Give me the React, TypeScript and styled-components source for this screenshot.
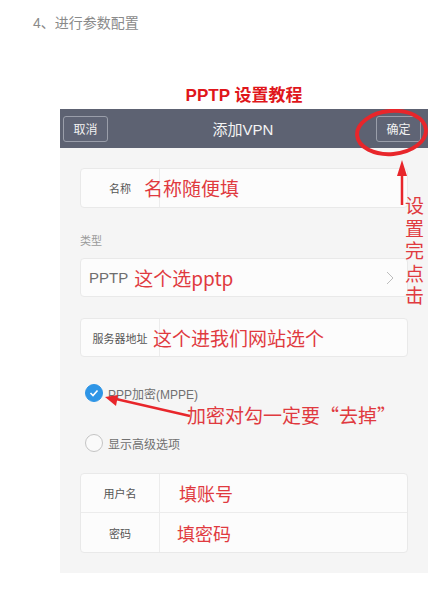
import styled, { createGlobalStyle } from "styled-components";

const GlobalStyle = createGlobalStyle`
	body {
		margin: 0;
		background: #fff;
		font-family: "Liberation Sans", "Noto Sans CJK SC", sans-serif;
	}
`;

const Page = styled.div`
	width: 443px;
	height: 594px;
	overflow: hidden;
`;

const Intro = styled.p`
	margin: 13px 0 0 33px;
	font-size: 14px;
	line-height: 20px;
	color: #8a8a8a;
`;

const Title = styled.h2`
	margin: 52px 0 2px 60px;
	width: 368px;
	text-align: center;
	font-size: 17px;
	line-height: 22px;
	font-weight: bold;
	color: #e0161b;
`;

const Phone = styled.div`
	position: relative;
	margin-left: 60px;
	width: 368px;
`;

const NavBar = styled.header`
	height: 39px;
	background: #5d6272;
	display: flex;
	align-items: center;
	justify-content: space-between;
	padding: 0 7px 0 3px;
	box-sizing: border-box;
`;

const NavButton = styled.button`
	width: 45px;
	height: 26px;
	border: 1px solid #9a9eaa;
	border-radius: 3px;
	background: #5f6475;
	color: #f2f2f2;
	font-size: 12px;
	font-family: inherit;
	padding: 0;
`;

const NavTitle = styled.span`
	font-size: 15px;
	color: #f4f4f4;
	margin-left: 2px;
`;

const Body = styled.div`
	background: #f5f5f5;
	padding: 20px 20px 20px;
	display: flex;
	flex-direction: column;
`;

const Card = styled.div<{ $mt?: number }>`
	margin-top: ${(p) => p.$mt ?? 0}px;
	background: #fcfcfc;
	border: 1px solid #e9e9e9;
	border-radius: 4px;
	display: flex;
	flex-direction: column;
`;

const Row = styled.div<{ $h: number }>`
	height: ${(p) => p.$h}px;
	display: flex;
	align-items: center;
	& + & {
		border-top: 1px solid #ececec;
	}
`;

const Label = styled.div`
	width: 78px;
	height: 100%;
	flex: none;
	display: flex;
	align-items: center;
	justify-content: center;
	border-right: 1px solid #ececec;
	font-size: 11px;
	color: #555;
`;

const Note = styled.span<{ $shift: number; $size?: number }>`
	margin-left: ${(p) => p.$shift}px;
	font-family: "Noto Sans CJK SC", sans-serif;
	font-size: ${(p) => p.$size ?? 19}px;
	line-height: 24px;
	color: #e03a3f;
	white-space: nowrap;
`;

const SectionLabel = styled.div`
	margin: 25px 0 9px;
	font-size: 11px;
	line-height: 16px;
	color: #9a9a9a;
`;

const TypeValue = styled.span`
	margin-left: 8px;
	font-size: 15px;
	color: #6e6e6e;
`;

const Chevron = styled.svg`
	margin-left: auto;
	margin-right: 13px;
`;

const Options = styled.div`
	margin: 24px 0 18px 5px;
	display: flex;
	flex-direction: column;
	gap: 26px;
`;

const Option = styled.div`
	height: 24px;
	display: flex;
	align-items: center;
	gap: 5px;
	font-size: 12px;
	color: #707070;
`;

const Radio = styled.span<{ $on?: boolean }>`
	width: 18px;
	height: 18px;
	box-sizing: border-box;
	border-radius: 50%;
	border: 1px solid ${(p) => (p.$on ? "#2e95e6" : "#c4c4c4")};
	background: ${(p) => (p.$on ? "#2e95e6" : "#fafafa")};
	display: flex;
	align-items: center;
	justify-content: center;
`;

const Overlay = styled.svg`
	position: absolute;
	left: 0;
	top: 0;
	pointer-events: none;
`;

const VerticalNote = styled.span`
	position: absolute;
	left: 345px;
	top: 85px;
	width: 19px;
	font-family: "Noto Sans CJK SC", sans-serif;
	font-size: 19px;
	line-height: 22.6px;
	color: #e03a3f;
	word-break: break-all;
`;

const ArrowNote = styled.span`
	position: absolute;
	left: 127px;
	top: 294px;
	font-family: "Noto Sans CJK SC", sans-serif;
	font-size: 19px;
	line-height: 24px;
	color: #e03a3f;
	white-space: nowrap;
`;

export default function App() {
	return (
		<Page>
			<GlobalStyle />
			<Intro>4、进行参数配置</Intro>
			<Title>PPTP 设置教程</Title>
			<Phone>
				<NavBar>
					<NavButton>取消</NavButton>
					<NavTitle>添加VPN</NavTitle>
					<NavButton>确定</NavButton>
				</NavBar>
				<Body>
					<Card>
						<Row $h={38}>
							<Label>名称</Label>
							<Note $shift={-16}>名称随便填</Note>
						</Row>
					</Card>
					<SectionLabel>类型</SectionLabel>
					<Card>
						<Row $h={37}>
							<TypeValue>PPTP</TypeValue>
							<Note $shift={6}>这个选pptp</Note>
							<Chevron width="8" height="14" viewBox="0 0 8 14">
								<polyline points="1,1 7,7 1,13" fill="none" stroke="#bdbdbd" strokeWidth="1" />
							</Chevron>
						</Row>
					</Card>
					<Card $mt={21}>
						<Row $h={37}>
							<Label>服务器地址</Label>
							<Note $shift={-7}>这个进我们网站选个</Note>
						</Row>
					</Card>
					<Options>
						<Option>
							<Radio $on>
								<svg width="10" height="8" viewBox="0 0 10 8">
									<polyline points="1.5,4 4,6.5 8.5,1.5" fill="none" stroke="#fff" strokeWidth="1.6" />
								</svg>
							</Radio>
							PPP加密(MPPE)
						</Option>
						<Option>
							<Radio />
							显示高级选项
						</Option>
					</Options>
					<Card>
						<Row $h={38}>
							<Label>用户名</Label>
							<Note $shift={19} $size={18}>填账号</Note>
						</Row>
						<Row $h={39}>
							<Label>密码</Label>
							<Note $shift={17} $size={18}>填密码</Note>
						</Row>
					</Card>
				</Body>
				<Overlay width="368" height="462" viewBox="0 0 368 462">
					<ellipse cx="331.5" cy="23.5" rx="34.5" ry="21.5" fill="none" stroke="#e8262b" strokeWidth="4" transform="rotate(-5 331.5 23.5)" />
					<line x1="342" y1="62" x2="342" y2="96" stroke="#e8262b" strokeWidth="2.5" />
					<polygon points="337,67 342,51 347,67" fill="#e8262b" />
					<line x1="130" y1="307" x2="56" y2="290" stroke="#e8262b" strokeWidth="2.5" />
					<polygon points="45,288 58,286 56,297" fill="#e8262b" />
				</Overlay>
				<VerticalNote>设置完点击</VerticalNote>
				<ArrowNote>加密对勾一定要“去掉”</ArrowNote>
			</Phone>
		</Page>
	);
}
